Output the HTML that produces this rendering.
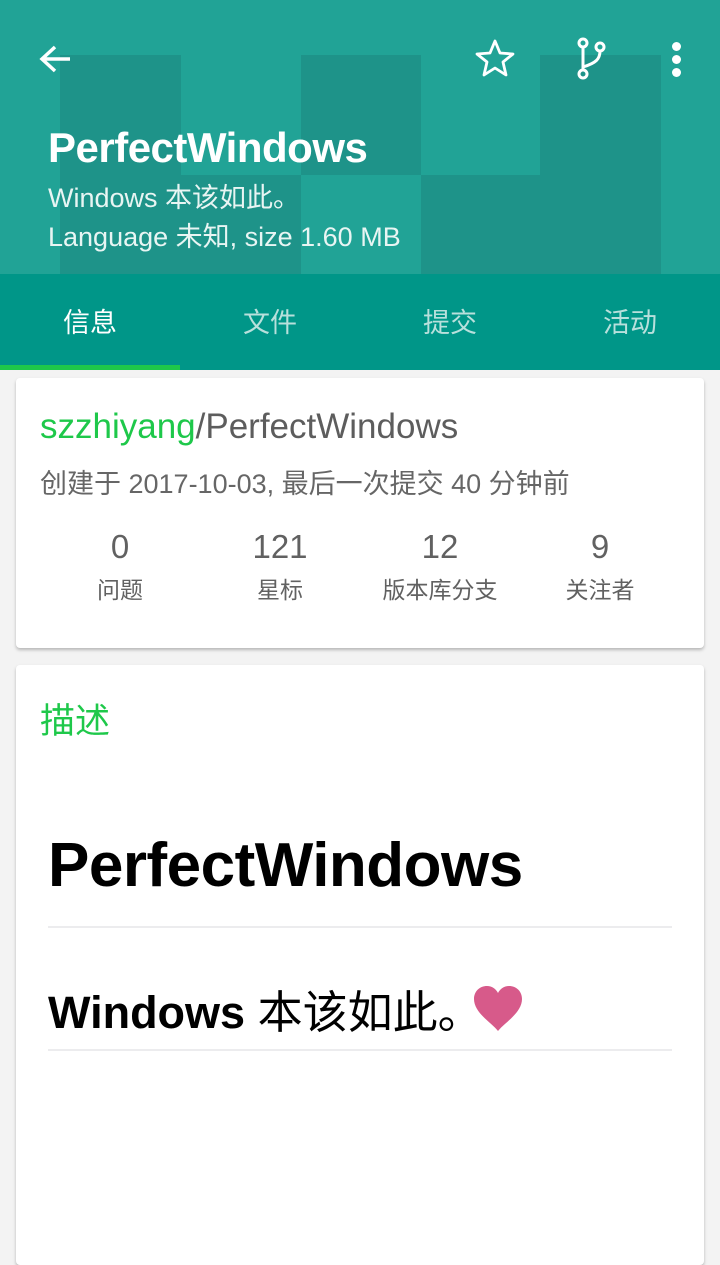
<!DOCTYPE html>
<html><head><meta charset="utf-8"><style>
*{margin:0;padding:0;box-sizing:border-box}
body{width:720px;height:1234px;overflow:hidden;background:#f3f3f3;font-family:"Liberation Sans","Noto Sans CJK SC",sans-serif;position:relative}
.hdr{position:absolute;left:0;top:0;width:720px;height:274px;background:#21a396;overflow:hidden}
.blk{position:absolute;background:#1e9389}
.t{position:absolute;white-space:nowrap}
.tabs{position:absolute;top:274px;left:0;width:720px;height:96px;background:#009688}
.tab{position:absolute;top:0;width:180px;height:96px;line-height:98px;text-align:center;font-size:27px;color:#b8e0dc}
.card{position:absolute;left:16px;width:688px;background:#fff;border-radius:4px;box-shadow:0 2px 3px rgba(0,0,0,.25)}
.stat{position:absolute;width:160px;text-align:center;color:#616161}
.hr{position:absolute;left:48px;width:624px;height:2px;background:#ececee}
</style></head><body>
<div class="hdr">
<div class="blk" style="left:60px;top:55px;width:121px;height:219px"></div>
<div class="blk" style="left:181px;top:175px;width:120px;height:99px"></div>
<div class="blk" style="left:301px;top:55px;width:120px;height:120px"></div>
<div class="blk" style="left:421px;top:175px;width:119px;height:99px"></div>
<div class="blk" style="left:540px;top:55px;width:121px;height:219px"></div>
<svg style="position:absolute;left:36px;top:40px" width="40" height="40" viewBox="0 0 40 40"><path d="M34 19H8M19 7L6 19l13 12" fill="none" stroke="#fff" stroke-width="3.5"/></svg>
<svg style="position:absolute;left:474px;top:38px" width="42" height="40" viewBox="0 0 42 40"><path d="M21 3l5 12 13 1-10 8 3 13-11-7-11 7 3-13-10-8 13-1z" fill="none" stroke="#fff" stroke-width="2.8" stroke-linejoin="round"/></svg>
<svg style="position:absolute;left:574px;top:36px" width="36" height="46" viewBox="0 0 36 46"><g fill="none" stroke="#fff" stroke-width="3"><circle cx="9" cy="7" r="4"/><circle cx="9" cy="38" r="4"/><circle cx="26" cy="11" r="4"/><path d="M9 11v23M26 15c0 8-4 12-17 16"/></g></svg>
<div style="position:absolute;left:672px;top:42px;width:9px;height:9px;border-radius:50%;background:#fff"></div>
<div style="position:absolute;left:672px;top:55px;width:9px;height:9px;border-radius:50%;background:#fff"></div>
<div style="position:absolute;left:672px;top:68px;width:9px;height:9px;border-radius:50%;background:#fff"></div>
<div class="t" style="left:48px;top:124px;font-size:42px;font-weight:bold;color:#fff;letter-spacing:-0.5px">PerfectWindows</div>
<div class="t" style="left:48px;top:176px;font-size:27px;color:#e8f5f3">Windows 本该如此。</div>
<div class="t" style="left:48px;top:215px;font-size:27px;color:#e8f5f3">Language 未知, size 1.60 MB</div>
</div>
<div class="tabs">
<div class="tab" style="left:0;color:#fff">信息</div>
<div class="tab" style="left:180px">文件</div>
<div class="tab" style="left:360px">提交</div>
<div class="tab" style="left:540px">活动</div>
<div style="position:absolute;left:0;top:91px;width:180px;height:5px;background:#1ec84a"></div>
</div>
<div class="card" style="top:378px;height:270px">
<div class="t" style="left:24px;top:29px;font-size:35px;color:#5d5d5d"><span style="color:#1ec84a">szzhiyang</span>/PerfectWindows</div>
<div class="t" style="left:24px;top:84px;font-size:27px;color:#666">创建于 2017-10-03, 最后一次提交 40 分钟前</div>
<div class="stat" style="left:24px;top:150px;font-size:33px">0</div>
<div class="stat" style="left:184px;top:150px;font-size:33px">121</div>
<div class="stat" style="left:344px;top:150px;font-size:33px">12</div>
<div class="stat" style="left:504px;top:150px;font-size:33px">9</div>
<div class="stat" style="left:24px;top:193px;font-size:23px">问题</div>
<div class="stat" style="left:184px;top:193px;font-size:23px">星标</div>
<div class="stat" style="left:344px;top:193px;font-size:23px">版本库分支</div>
<div class="stat" style="left:504px;top:193px;font-size:23px">关注者</div>
</div>
<div class="card" style="top:665px;height:600px">
<div class="t" style="left:24px;top:28px;font-size:35px;color:#1ec84a">描述</div>
</div>
<div class="t" style="left:48px;top:830px;font-size:62px;font-weight:bold;color:#000;letter-spacing:-0.5px">PerfectWindows</div>
<div class="hr" style="top:926px"></div>
<div class="t" style="left:48px;top:976px;font-size:45px;color:#000"><b>Windows</b> 本该如此。</div>
<svg style="position:absolute;left:472px;top:985px" width="52" height="46" viewBox="0 0 52 46"><path d="M26 46C20 38 2 28 2 14 2 6 8 1 15 1c5 0 9 3 11 7 2-4 6-7 11-7 7 0 13 5 13 13 0 14-18 24-24 32z" fill="#d75a8a"/></svg>
<div class="hr" style="top:1049px"></div>
</body></html>
